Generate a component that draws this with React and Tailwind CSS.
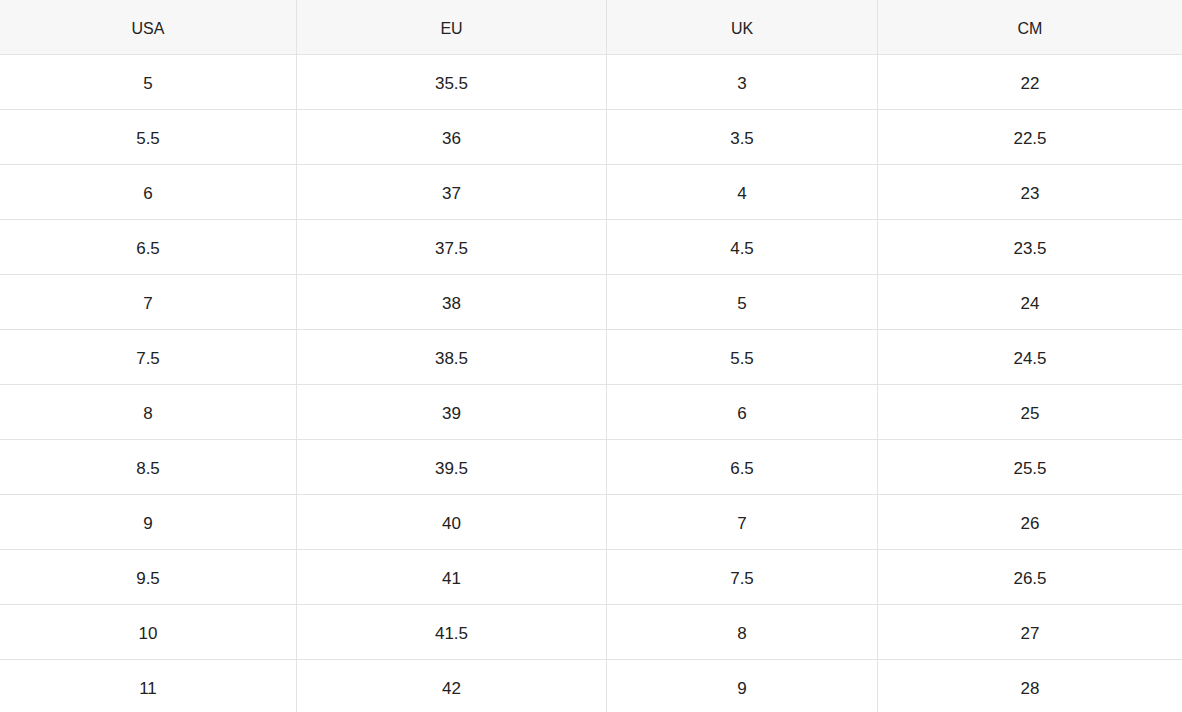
const rows = [
  ["5", "35.5", "3", "22"],
  ["5.5", "36", "3.5", "22.5"],
  ["6", "37", "4", "23"],
  ["6.5", "37.5", "4.5", "23.5"],
  ["7", "38", "5", "24"],
  ["7.5", "38.5", "5.5", "24.5"],
  ["8", "39", "6", "25"],
  ["8.5", "39.5", "6.5", "25.5"],
  ["9", "40", "7", "26"],
  ["9.5", "41", "7.5", "26.5"],
  ["10", "41.5", "8", "27"],
  ["11", "42", "9", "28"],
];

function Row({ cells, header }) {
  const widths = ["w-[297px]", "w-[310px]", "w-[271px]", "flex-1"];
  return (
    <div className={`flex h-[55px] border-b border-[#e3e3e3] ${header ? "bg-[#f7f7f7]" : "bg-white"}`}>
      {cells.map((c, i) => (
        <div
          key={i}
          className={`${widths[i]} flex items-center justify-center pt-[4px] ${i < 3 ? "border-r border-[#e3e3e3]" : ""} ${header ? "text-[16px]" : "text-[17px]"} text-[#222]`}
        >
          {c}
        </div>
      ))}
    </div>
  );
}

export default function App() {
  return (
    <div className="w-[1182px] h-[712px] overflow-hidden bg-white" style={{ fontFamily: '"Liberation Sans", Arial, sans-serif' }}>
      <Row cells={["USA", "EU", "UK", "CM"]} header />
      {rows.map((r, i) => (
        <Row key={i} cells={r} />
      ))}
    </div>
  );
}
